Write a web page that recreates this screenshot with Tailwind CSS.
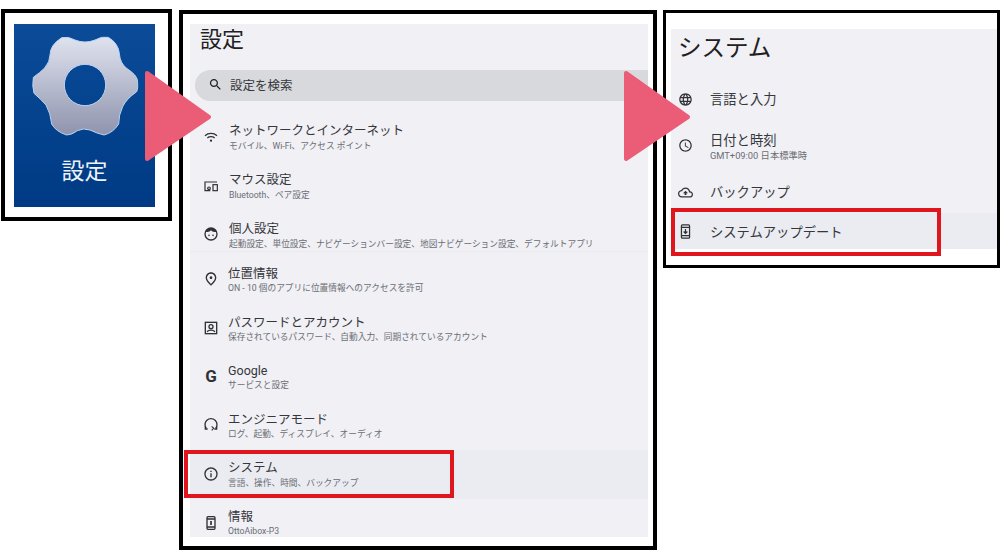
<!DOCTYPE html>
<html lang="ja">
<head>
<meta charset="UTF-8">
<title>設定</title>
<script src="https://cdn.jsdelivr.net/npm/@tailwindcss/browser@4"></script>
</head>
<body class="bg-white font-['Roboto','Noto_Sans_CJK_JP',sans-serif] text-[#35373b]">
<div class="relative w-[1000px] h-[560px] overflow-hidden bg-white">

  <!-- app icon -->
  <section class="absolute left-[1px] top-[9px] w-[171px] h-[212px] border-4 border-black">
    <div class="relative mt-[11px] ml-[9px] w-[141px] h-[183px] bg-linear-to-b from-[#0b4b98] to-[#003a84]">
      <svg class="block" width="141" height="183" viewBox="42 72 423 549">
        <defs>
          <linearGradient id="gear" x1="0" y1="0" x2="0" y2="1">
            <stop offset="0" stop-color="#dfe3ef"/>
            <stop offset="1" stop-color="#8f93ad"/>
          </linearGradient>
        </defs>
        <path fill="url(#gear)" fill-rule="evenodd" stroke="#b9d3f0" stroke-width="3" d="M150 165Q150 135 185 113Q205 108 225 120Q255 132 285 120Q305 108 325 112Q355 130 358 160Q360 190 380 205Q410 225 412 240Q415 265 410 275Q378 298 368 320Q356 345 356 372Q340 398 312 405Q290 400 270 390Q250 383 232 392Q215 405 200 405Q168 395 155 372Q152 340 138 315Q120 295 102 280Q96 260 100 232Q120 218 134 204Q150 185 150 165ZM255 193A62 62 0 1 0 255.100 317A62 62 0 1 0 255 193Z"/>
      </svg>
      <span class="absolute left-0 right-0 top-[130px] text-center text-[23px] leading-[36px] font-normal text-[#eef3fa]">設定</span>
    </div>
  </section>

  <!-- settings list -->
  <section class="absolute left-[179px] top-[10px] w-[478px] h-[540px] border-4 border-black">
    <div class="mt-[10px] ml-[7px] w-[458px] h-[513px] bg-[#f0f0f5] overflow-hidden">
      <h1 class="pl-[10px] h-[46px] pt-[1px] text-[22px] leading-[30px] font-normal text-[#1f2022]">設定</h1>
      <div class="ml-[5px] h-[31px] rounded-l-full rounded-r-[16px] bg-[#d7d9dd] flex items-center pl-[13px] gap-[7px]">
        <svg class="w-[15px] h-[15px] -translate-y-px" viewBox="0 0 24 24" fill="#1f2022"><path d="M15.500 14h-.79l-.28-.27C15.410 12.590 16 11.110 16 9.500 16 5.910 13.090 3 9.500 3S3 5.910 3 9.500 5.910 16 9.500 16c1.610 0 3.090-.59 4.230-1.570l.27.28v.79l5 4.990L20.490 19l-4.990-5zm-6 0C7.010 14 5 11.990 5 9.500S7.010 5 9.500 5 14 7.010 14 9.500 11.990 14 9.500 14z"/></svg>
        <span class="text-[12.500px] leading-[18px]">設定を検索</span>
      </div>

      <div class="mt-[12px] h-[49px] flex items-center pl-[13px] gap-[10px]">
        <svg class="w-[16px] h-[16px] -translate-y-px" viewBox="0 0 24 24" fill="none" stroke="#303236" stroke-width="2"><path d="M3 10c5-4.500 13-4.500 18 0M6.500 13.500c3-2.600 8-2.600 11 0"/><circle cx="12" cy="17.500" r="1.700" fill="#303236" stroke="none"/></svg>
        <div><p class="text-[12.500px] leading-[15px]">ネットワークとインターネット</p><p class="text-[8.700px] leading-[15px] text-[#6a6d73] translate-y-px">モバイル、Wi-Fi、アクセス ポイント</p></div>
      </div>
      <div class="h-[49px] flex items-center pl-[13px] gap-[10px]">
        <svg class="w-[16px] h-[16px] -translate-y-px" viewBox="0 0 24 24" fill="none" stroke="#303236" stroke-width="1.800"><path d="M21 6H3v13h8"/><rect x="15" y="10" width="6.500" height="9"/><circle cx="9" cy="15.500" r="2"/></svg>
        <div><p class="text-[12.500px] leading-[15px]">マウス設定</p><p class="text-[8.700px] leading-[15px] text-[#6a6d73] translate-y-px">Bluetooth、ペア設定</p></div>
      </div>
      <div class="h-[41px] pt-[8px] flex items-center pl-[13px] gap-[10px] border-b border-[#e9e9ee] box-border">
        <svg class="w-[16px] h-[16px] -translate-y-px" viewBox="0 0 24 24" fill="none" stroke="#303236" stroke-width="2"><circle cx="12" cy="12" r="9"/><path d="M4 8.500c3 1 6 .5 8-2 2 2.500 5 3 8 2C18.500 5 15.500 3 12 3S5.500 5 4 8.500z" fill="#303236" stroke="none"/><circle cx="9" cy="14" r="1.200" fill="#303236" stroke="none"/><circle cx="15" cy="14" r="1.200" fill="#303236" stroke="none"/></svg>
        <div class="translate-y-px"><p class="text-[12.500px] leading-[15px]">個人設定</p><p class="text-[8.700px] leading-[15px] text-[#6a6d73] whitespace-nowrap translate-y-px">起動設定、単位設定、ナビゲーションバー設定、地図ナビゲーション設定、デフォルトアプリ</p></div>
      </div>
      <div class="h-[52px] pt-[4px] flex items-center pl-[13px] gap-[9px] box-border">
        <svg class="w-[16px] h-[16px] -translate-y-px" viewBox="0 0 24 24" fill="#303236"><path d="M12 12c-1.100 0-2-.9-2-2s.9-2 2-2 2 .9 2 2-.9 2-2 2zm6-1.800C18 6.570 15.350 4 12 4s-6 2.570-6 6.200c0 2.340 1.950 5.440 6 9.140 4.050-3.700 6-6.800 6-9.140zM12 2c4.200 0 8 3.220 8 8.200 0 3.320-2.670 7.250-8 11.800-5.330-4.550-8-8.480-8-11.800C4 5.220 7.800 2 12 2z"/></svg>
        <div class="translate-y-px"><p class="text-[12.500px] leading-[15px]">位置情報</p><p class="text-[8.700px] leading-[15px] text-[#6a6d73]">ON - 10 個のアプリに位置情報へのアクセスを許可</p></div>
      </div>
      <div class="h-[49px] flex items-center pl-[13px] gap-[9px]">
        <svg class="w-[16px] h-[16px] -translate-y-px" viewBox="0 0 24 24" fill="none" stroke="#303236" stroke-width="2"><rect x="3.500" y="3.500" width="17" height="17"/><circle cx="12" cy="10" r="3"/><path d="M6 17.500c3-3 9-3 12 0"/></svg>
        <div class="translate-y-px"><p class="text-[12.500px] leading-[15px]">パスワードとアカウント</p><p class="text-[8.700px] leading-[15px] text-[#6a6d73]">保存されているパスワード、自動入力、同期されているアカウント</p></div>
      </div>
      <div class="h-[48px] flex items-center pl-[13px] gap-[9px]">
        <span class="w-[16px] text-center text-[17px] leading-[16px] font-bold text-[#303236] -translate-y-px">G</span>
        <div class="translate-y-px"><p class="text-[12.500px] leading-[15px]">Google</p><p class="text-[8.700px] leading-[15px] text-[#6a6d73]">サービスと設定</p></div>
      </div>
      <div class="h-[49px] flex items-center pl-[13px] gap-[9px]">
        <svg class="w-[16px] h-[16px] -translate-y-px" viewBox="0 0 24 24" fill="none" stroke="#303236" stroke-width="2"><path d="M5 17a9 9 0 1 1 14 0"/><path d="M3.500 13.500V18H7M20.500 13.500V18H17"/><path d="M13 14l3 3-3 3" stroke-width="1.600"/></svg>
        <div class="translate-y-px"><p class="text-[12.500px] leading-[15px]">エンジニアモード</p><p class="text-[8.700px] leading-[15px] text-[#6a6d73]">ログ、起動、ディスプレイ、オーディオ</p></div>
      </div>
      <div class="h-[49px] flex items-center pl-[13px] gap-[9px] bg-[#ebecf1]">
        <svg class="w-[16px] h-[16px] -translate-y-px" viewBox="0 0 24 24" fill="#303236"><path d="M11 7h2v2h-2zm0 4h2v6h-2zm1-9C6.480 2 2 6.480 2 12s4.480 10 10 10 10-4.480 10-10S17.520 2 12 2zm0 18c-4.410 0-8-3.590-8-8s3.590-8 8-8 8 3.590 8 8-3.590 8-8 8z"/></svg>
        <div><p class="text-[12.500px] leading-[15px]">システム</p><p class="text-[8.700px] leading-[15px] text-[#6a6d73] translate-y-px">言語、操作、時間、バックアップ</p></div>
      </div>
      <div class="h-[49px] flex items-center pl-[13px] gap-[9px]">
        <svg class="w-[16px] h-[16px] -translate-y-px" viewBox="0 0 24 24" fill="none" stroke="#303236" stroke-width="2"><rect x="6" y="2.500" width="12" height="19" rx="1.500"/><path d="M6 6h12M6 18h12" /><path d="M12 9v6" stroke-width="2.500"/></svg>
        <div><p class="text-[12.500px] leading-[15px]">情報</p><p class="text-[8.700px] leading-[15px] text-[#6a6d73]">OttoAibox-P3</p></div>
      </div>
    </div>
  </section>

  <!-- system list -->
  <section class="absolute left-[663px] top-[10px] w-[337px] h-[258px] border-[3px] border-black">
    <div class="mt-[16px] ml-[5px] w-[326px] h-[220px] bg-[#f0f0f5] overflow-hidden">
      <h2 class="pl-[7px] h-[49px] text-[23.500px] leading-[38px] font-normal text-[#1f2022]">システム</h2>
      <div class="h-[41px] flex items-center pl-[7px] gap-[17px]">
        <svg class="w-[15px] h-[15px] translate-y-px" viewBox="0 0 24 24" fill="#303236"><path d="M11.990 2C6.470 2 2 6.480 2 12s4.470 10 9.990 10C17.520 22 22 17.520 22 12S17.520 2 11.990 2zm6.930 6h-2.950c-.32-1.250-.78-2.450-1.380-3.560 1.840.63 3.370 1.910 4.330 3.560zM12 4.040c.83 1.200 1.480 2.530 1.910 3.960h-3.820c.43-1.430 1.080-2.760 1.910-3.960zM4.260 14C4.100 13.360 4 12.690 4 12s.1-1.360.26-2h3.380c-.08.66-.14 1.320-.14 2 0 .68.06 1.340.14 2H4.260zm.82 2h2.950c.32 1.250.78 2.450 1.380 3.560-1.840-.63-3.370-1.900-4.330-3.560zm2.950-8H5.080c.96-1.660 2.490-2.930 4.330-3.560C8.810 5.550 8.350 6.750 8.030 8zM12 19.960c-.83-1.200-1.480-2.530-1.910-3.960h3.820c-.43 1.430-1.080 2.760-1.910 3.960zM14.340 14H9.660c-.09-.66-.16-1.320-.16-2 0-.68.07-1.350.16-2h4.680c.09.650.16 1.320.16 2 0 .68-.07 1.340-.16 2zm.25 5.560c.6-1.110 1.060-2.310 1.380-3.560h2.950c-.96 1.650-2.490 2.930-4.330 3.560zM16.360 14c.08-.66.14-1.320.14-2 0-.68-.06-1.340-.14-2h3.380c.16.640.26 1.310.26 2s-.1 1.360-.26 2h-3.380z"/></svg>
        <p class="text-[13.300px] leading-[16px] translate-y-px">言語と入力</p>
      </div>
      <div class="h-[56px] flex items-center pl-[7px] gap-[17px]">
        <svg class="w-[15px] h-[15px] -translate-y-[2px]" viewBox="0 0 24 24" fill="#303236"><path d="M11.990 2C6.470 2 2 6.480 2 12s4.470 10 9.990 10C17.520 22 22 17.520 22 12S17.520 2 11.990 2zM12 20c-4.420 0-8-3.580-8-8s3.580-8 8-8 8 3.580 8 8-3.580 8-8 8zm.5-13H11v6l5.250 3.150.75-1.230-4.500-2.670z"/></svg>
        <div class="translate-y-px"><p class="text-[13.300px] leading-[16px]">日付と時刻</p><p class="text-[9.300px] leading-[14px] text-[#6a6d73]">GMT+09:00 日本標準時</p></div>
      </div>
      <div class="h-[38px] pb-[4px] box-border flex items-center pl-[7px] gap-[17px]">
        <svg class="w-[15px] h-[15px]" viewBox="0 0 24 24" fill="#303236"><path d="M19.350 10.040C18.670 6.590 15.640 4 12 4 9.110 4 6.600 5.640 5.350 8.040 2.340 8.360 0 10.910 0 14c0 3.310 2.690 6 6 6h13c2.760 0 5-2.240 5-5 0-2.640-2.050-4.780-4.650-4.960zM19 18H6c-2.210 0-4-1.790-4-4 0-2.050 1.530-3.760 3.560-3.970l1.070-.11.5-.95C8.080 7.140 9.940 6 12 6c2.620 0 4.880 1.860 5.390 4.430l.3 1.500 1.530.11c1.560.1 2.780 1.410 2.780 2.960 0 1.650-1.350 3-3 3zM8 13h2.550v3h2.900v-3H16l-4-4z"/></svg>
        <p class="text-[13.300px] leading-[16px] translate-y-px">バックアップ</p>
      </div>
      <div class="h-[36px] flex items-center pl-[7px] gap-[17px] bg-[#ebecf1]">
        <svg class="w-[15px] h-[15px]" viewBox="0 0 24 24" fill="none" stroke="#303236" stroke-width="2"><rect x="5.500" y="1.500" width="13" height="21" rx="1.500"/><path d="M5.500 5.500h13M5.500 18.500h13"/><path d="M12 8v6M9 12l3 3 3-3"/></svg>
        <p class="text-[13.300px] leading-[16px] translate-y-[2px]">システムアップデート</p>
      </div>
    </div>
  </section>

  <!-- annotations -->
  <div class="absolute left-[184px] top-[450px] w-[270px] h-[48px] border-4 border-[#e0161f]"></div>
  <div class="absolute left-[671px] top-[208px] w-[270px] h-[48px] border-4 border-[#e0161f]"></div>
  <svg class="absolute left-[144px] top-[70px]" width="68" height="92" viewBox="0 0 68 92"><path d="M3 3L65 47L3 89Z" fill="#eb5c76" stroke="#eb5c76" stroke-width="4" stroke-linejoin="round"/></svg>
  <svg class="absolute left-[623px] top-[70px]" width="68" height="92" viewBox="0 0 68 92"><path d="M3 3L65 47L3 89Z" fill="#eb5c76" stroke="#eb5c76" stroke-width="4" stroke-linejoin="round"/></svg>
</div>
</body>
</html>
